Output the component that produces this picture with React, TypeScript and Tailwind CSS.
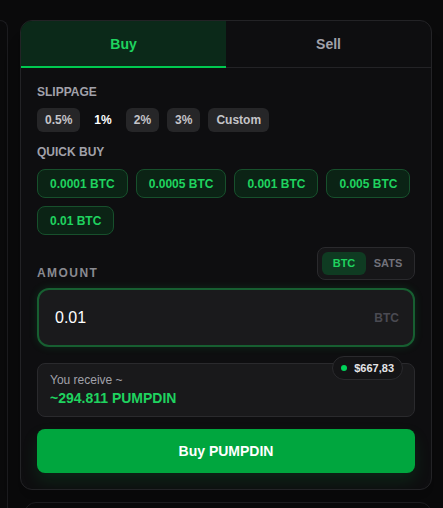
import { useState } from "react";

const slippages = ["0.5%", "1%", "2%", "3%", "Custom"];
const quickBuys = ["0.0001 BTC", "0.0005 BTC", "0.001 BTC", "0.005 BTC", "0.01 BTC"];

export default function App() {
  const [tab, setTab] = useState<"buy" | "sell">("buy");
  const [slip, setSlip] = useState("1%");
  const [unit, setUnit] = useState<"BTC" | "SATS">("BTC");
  const [amount, setAmount] = useState("0.01");

  return (
    <div
      className="h-[508px] w-full overflow-hidden bg-[#0a0a0b] pt-5"
      style={{ fontFamily: "'Liberation Sans', Arial, sans-serif" }}
    >
      <div className="flex gap-3">
        <div className="h-[490px] w-[8px] rounded-tr-xl border-t border-r border-[#1c1c1f]" />

        <div className="flex w-[412px] flex-col">
          <div className="overflow-hidden rounded-xl border border-[#232326] bg-[#0e0e10] shadow-xl">
            <div className="grid grid-cols-2 border-b border-[#232326]">
              <button
                onClick={() => setTab("buy")}
                className={`-mb-px h-[47px] border-b-2 text-sm font-bold ${
                  tab === "buy"
                    ? "border-[#00c950] bg-[#0b2919] text-[#1fd35f]"
                    : "border-transparent text-[#a1a1aa]"
                }`}
              >
                Buy
              </button>
              <button
                onClick={() => setTab("sell")}
                className={`-mb-px h-[47px] border-b-2 text-sm font-bold ${
                  tab === "sell"
                    ? "border-[#fb2c36] bg-[#2a0b0e] text-[#ff6467]"
                    : "border-transparent text-[#a1a1aa]"
                }`}
              >
                Sell
              </button>
            </div>

            <div className="px-4 pt-4 pb-4">
              <div className="text-xs font-bold text-[#a1a1aa]">SLIPPAGE</div>
              <div className="mt-2 flex gap-2">
                {slippages.map((s) => (
                  <button
                    key={s}
                    onClick={() => setSlip(s)}
                    className={`h-6 rounded-md text-xs font-bold ${
                      slip === s ? "px-1.5 text-white" : "bg-[#262628] px-2 text-[#c4c4c8]"
                    }`}
                  >
                    {s}
                  </button>
                ))}
              </div>

              <div className="mt-3 text-xs font-bold text-[#a1a1aa]">QUICK BUY</div>
              <div className="mt-[9px] flex flex-wrap gap-2">
                {quickBuys.map((q) => (
                  <button
                    key={q}
                    onClick={() => setAmount(q.split(" ")[0])}
                    className="h-[29px] rounded-lg border border-[#17502c] bg-[#0b2315] px-3 text-xs font-bold text-[#1fd35f]"
                  >
                    {q}
                  </button>
                ))}
              </div>

              <div className="mt-3 flex items-end justify-between">
                <div className="-mb-px text-xs font-bold tracking-[0.12em] text-[#8a8a90]">
                  AMOUNT
                </div>
                <div className="flex rounded-lg border border-[#2a2a2d] bg-[#161618] p-1">
                  {(["BTC", "SATS"] as const).map((u) => (
                    <button
                      key={u}
                      onClick={() => setUnit(u)}
                      className={`h-[23px] w-[44px] rounded-md text-[11px] font-bold ${
                        unit === u ? "bg-[#0f3b22] text-[#1fd35f]" : "text-[#71717a]"
                      }`}
                    >
                      {u}
                    </button>
                  ))}
                </div>
              </div>

              <div className="mt-2 flex h-[59px] items-center rounded-xl border-2 border-[#175f31] bg-[#1a1a1c] pr-[14px] pl-4 shadow-[0_0_8px_rgba(0,201,80,0.15)]">
                <input
                  value={amount}
                  onChange={(e) => setAmount(e.target.value)}
                  className="w-full bg-transparent text-base text-white outline-none"
                />
                <span className="text-xs font-bold text-[#4a4a52]">{unit}</span>
              </div>

              <div className="relative mt-4 rounded-lg border border-[#2a2a2d] bg-[#19191b] px-3 py-2">
                <div className="text-xs text-[#a1a1aa]">You receive ~</div>
                <div className="text-sm font-bold text-[#1fd35f]">~294.811 PUMPDIN</div>
                <div className="absolute -top-2 right-[11px] flex h-6 items-center gap-[7px] rounded-full border border-[#2a2a2d] bg-[#141416] px-2">
                  <span className="h-1.5 w-1.5 rounded-full bg-[#00d45a]" />
                  <span className="text-[11px] font-bold text-[#e4e4e7]">$667,83</span>
                </div>
              </div>

              <button className="mt-3 h-11 w-full rounded-lg bg-[#00a63e] text-sm font-bold text-white shadow-[0_8px_16px_rgba(0,166,62,0.15)]">
                Buy PUMPDIN
              </button>
            </div>
          </div>

          <div className="mt-3 ml-1 h-10 rounded-xl border border-[#1c1c1f]" />
        </div>
      </div>
    </div>
  );
}
